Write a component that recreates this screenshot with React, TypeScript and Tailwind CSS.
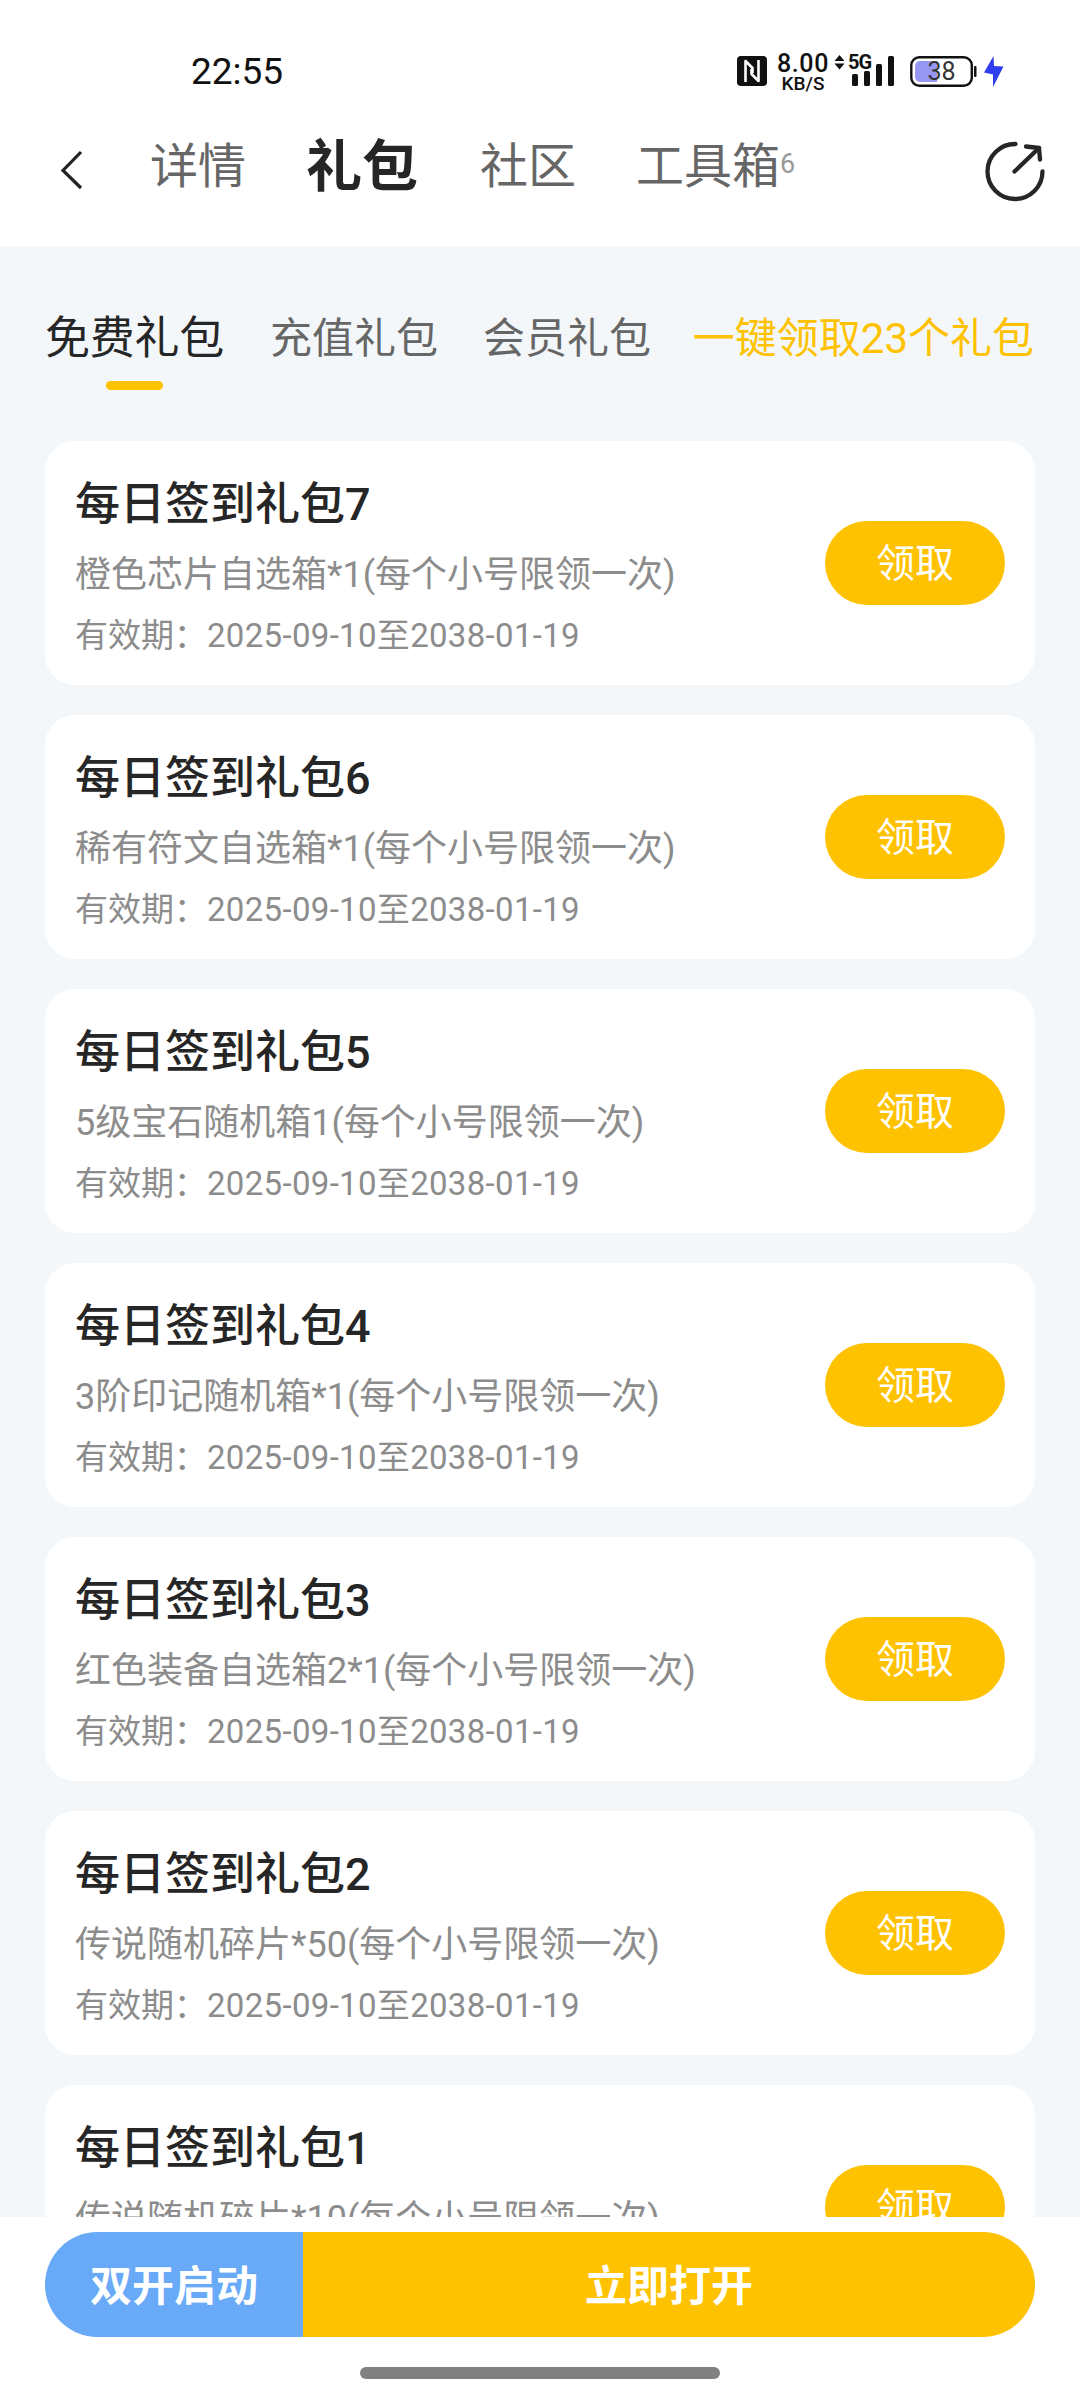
import React from 'react';

interface Gift {
  title: string;
  desc: string;
}

const gifts: Gift[] = [
  { title: '每日签到礼包7', desc: '橙色芯片自选箱*1(每个小号限领一次)' },
  { title: '每日签到礼包6', desc: '稀有符文自选箱*1(每个小号限领一次)' },
  { title: '每日签到礼包5', desc: '5级宝石随机箱1(每个小号限领一次)' },
  { title: '每日签到礼包4', desc: '3阶印记随机箱*1(每个小号限领一次)' },
  { title: '每日签到礼包3', desc: '红色装备自选箱2*1(每个小号限领一次)' },
  { title: '每日签到礼包2', desc: '传说随机碎片*50(每个小号限领一次)' },
  { title: '每日签到礼包1', desc: '传说随机碎片*10(每个小号限领一次)' },
];

const StatusBar: React.FC = () => {
  return (
    <div className="flex h-[110px] shrink-0 items-start pl-[191px] pt-[50px] text-[#111]">
      <span className="w-[546px] text-[37px] leading-[43px]">22:55</span>
      <svg className="mt-[6px] h-[30px] w-[30px]" viewBox="0 0 30 30" fill="none">
        <rect width="30" height="30" rx="4" fill="#111" />
        <path d="M8.500 26V5L15.500 12V17" stroke="#fff" strokeWidth="2.6" strokeLinejoin="round" />
        <path d="M21.500 4V25L14.500 18V13" stroke="#fff" strokeWidth="2.6" strokeLinejoin="round" />
      </svg>
      <div className="ml-[9px] flex w-[54px] flex-col items-center pt-[3px] font-medium">
        <span className="text-[25px] leading-[21px] tracking-[0.6px]">8.00</span>
        <span className="text-[19px] leading-[19px]">KB/S</span>
      </div>
      <svg className="ml-[4px] mt-[5px] h-[15px] w-[11px]" viewBox="0 0 10 15" fill="#111">
        <path d="M5 0l5 6H0zM5 14.500L0 8.500h10z" />
      </svg>
      <div className="ml-[3px] flex h-[37px] w-[48px] flex-col">
        <span className="pt-[3px] text-[20px] font-bold leading-[18px] tracking-[-1px]">5G</span>
        <svg className="-mt-[17px] h-[34px] w-[48px] shrink-0" viewBox="0 0 48 34" fill="#111">
          <rect x="4" y="20" width="6" height="12" rx="1.5" />
          <rect x="16" y="17" width="6" height="15" rx="1.5" />
          <rect x="28" y="10" width="6" height="22" rx="1.5" />
          <rect x="40" y="2" width="6" height="30" rx="1.5" />
        </svg>
      </div>
      <div className="relative ml-[14px] mt-[6px] h-[31px] w-[63px]">
        <svg className="h-[31px] w-[68px]" viewBox="0 0 68 31" fill="none">
          <rect x="1.3" y="1.3" width="60.5" height="28.4" rx="8" stroke="#111" strokeWidth="2.4" />
          <path d="M27 5H10a5 5 0 0 0-5 5v11a5 5 0 0 0 5 5h17z" fill="#9697f3" />
          <rect x="64" y="10" width="2.5" height="11" rx="1" fill="#111" />
        </svg>
        <span className="absolute inset-x-0 top-0 text-center text-[25px] leading-[31px] text-[#333]">38</span>
      </div>
      <svg className="ml-[11px] mt-[6px] h-[31px] w-[20px]" viewBox="0 0 20 31" fill="#2f3ff0">
        <path d="M9.500 0L0 16.500l9 2L9 31l10.500-20.500-9.500-.5z" />
      </svg>
    </div>
  );
};

const NavBar: React.FC = () => {
  return (
    <div className="flex h-[136px] shrink-0 items-start text-[48px] leading-[72px] text-[#666]">
      <svg className="ml-[60px] mt-[40px] h-[40px] w-[23px]" viewBox="0 0 23 40" fill="none">
        <path d="M21 2L3 20.500L21 38" stroke="#222" strokeWidth="3.2" />
      </svg>
      <span className="ml-[67px] mt-[21px]">详情</span>
      <span className="ml-[60px] mt-[21px] text-[56px] font-bold text-[#262626]">礼包</span>
      <span className="ml-[62px] mt-[21px]">社区</span>
      <span className="ml-[60px] mt-[21px]">工具箱</span>
      <span className="mt-[38px] text-[27px] leading-[32px] text-[#999]">6</span>
      <svg className="ml-auto mr-[35px] mt-[31px] h-[62px] w-[62px]" viewBox="0 0 62 62" fill="none" stroke="#262626" strokeWidth="4.300" strokeLinecap="round" strokeLinejoin="round">
        <path d="M32.500 3A27.500 27.500 0 1 0 59.500 30.500" />
        <path d="M31.500 30.500L56 7" />
        <path d="M43 5.500L56 7L57 18.500" />
      </svg>
    </div>
  );
};

const GiftCard: React.FC<Gift> = ({ title, desc }) => {
  return (
    <div className="flex h-[244px] shrink-0 items-center justify-between rounded-[30px] bg-white px-[30px]">
      <div className="flex h-full flex-col pt-[32px]">
        <div className="text-[45px] font-medium leading-[64px] text-[#262626]">{title}</div>
        <div className="mt-[11px] text-[36px] leading-[54px] text-[#8c8c8c]">{desc}</div>
        <div className="mt-[9px] text-[33px] leading-[50px] text-[#8c8c8c]">
          有效期：<span className="tracking-[0.32px]">2025-09-10至2038-01-19</span>
        </div>
      </div>
      <button className="h-[84px] w-[180px] rounded-full bg-[#ffc200] pt-[3px] text-[39px] leading-[81px] text-white">领取</button>
    </div>
  );
};

export default function App() {
  return (
    <div className="flex h-[2400px] w-[1080px] flex-col overflow-hidden bg-white font-[Roboto,'Noto_Sans_CJK_SC',sans-serif]">
      <StatusBar />
      <NavBar />
      <main className="flex h-[1971px] shrink-0 flex-col overflow-hidden bg-[#f3f7fa] px-[45px]">
        <div className="flex h-[195px] shrink-0 items-start pt-[61px] text-[42px] leading-[64px] text-[#666]">
          <div className="flex w-[179px] flex-col items-center">
            <span className="whitespace-nowrap text-[45px] tracking-[-0.3px] text-[#262626]">免费礼包</span>
            <span className="mt-[10px] h-[9px] w-[57px] rounded-full bg-[#ffc200]" />
          </div>
          <span className="ml-[46px]">充值礼包</span>
          <span className="ml-[45px]">会员礼包</span>
          <span className="ml-auto mr-px text-[#ffc200]">一键领取23个礼包</span>
        </div>
        <div className="flex flex-col gap-[30px]">
          {gifts.map((gift) => (
            <GiftCard key={gift.title} {...gift} />
          ))}
        </div>
      </main>
      <footer className="flex grow flex-col items-center px-[45px] pt-[15px]">
        <div className="flex h-[105px] w-full text-[42px] font-bold leading-[101px] text-white">
          <button className="w-[258px] rounded-l-full bg-[#68a9f8] pt-[4px]">双开启动</button>
          <button className="grow rounded-r-full bg-[#ffc200] pt-[4px]">立即打开</button>
        </div>
        <div className="mt-[30px] h-[12px] w-[360px] rounded-full bg-[#808080]" />
      </footer>
    </div>
  );
}
